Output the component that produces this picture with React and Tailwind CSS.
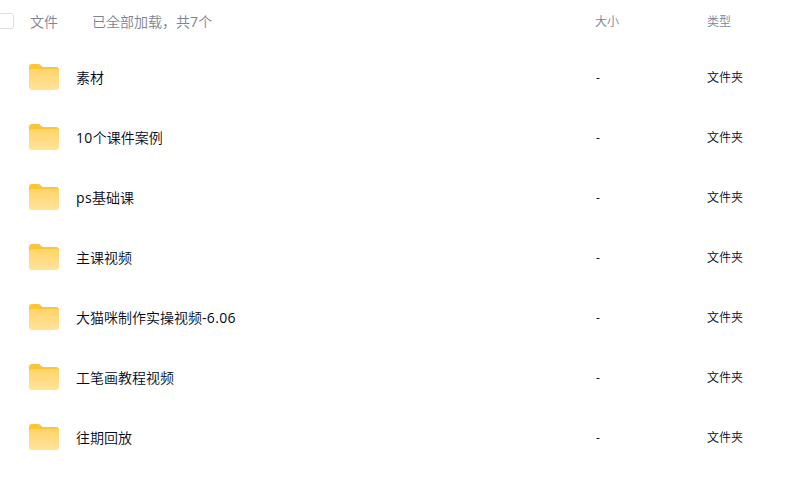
import React from "react";

const files = [
  { name: "素材", size: "-", type: "文件夹" },
  { name: "10个课件案例", size: "-", type: "文件夹" },
  { name: "ps基础课", size: "-", type: "文件夹" },
  { name: "主课视频", size: "-", type: "文件夹" },
  { name: "大猫咪制作实操视频-6.06", size: "-", type: "文件夹" },
  { name: "工笔画教程视频", size: "-", type: "文件夹" },
  { name: "往期回放", size: "-", type: "文件夹" },
];

// latin letters and digits are set a little heavier and wider than the chinese text
function MixedText({ children }) {
  return children.split(/([\x21-\x7e]+)/).map((part, i) =>
    i % 2 ? <span key={i} className="font-normal tracking-[0.35px]">{part}</span> : part
  );
}

function FolderIcon() {
  return (
    <svg width="30" height="26" viewBox="0 0 30 26" className="shrink-0">
      <defs>
        <linearGradient id="folder" x1="0" y1="0" x2="0" y2="1">
          <stop offset="0" stopColor="#ffd567" />
          <stop offset="1" stopColor="#ffe29f" />
        </linearGradient>
      </defs>
      <path d="M0 3a3 3 0 0 1 3-3h6c1.2 0 1.9.3 2.7 1.2l.7.8c.7.8 1.4 1 2.6 1H27a3 3 0 0 1 3 3V14H0z" fill="#fdc536" />
      <path d="M0 8a3 3 0 0 1 3-3h24a3 3 0 0 1 3 3v15a3 3 0 0 1-3 3H3a3 3 0 0 1-3-3z" fill="url(#folder)" />
    </svg>
  );
}

export default function App() {
  return (
    <div className="h-[478px] w-[792px] overflow-hidden bg-white font-['Open_Sans','Noto_Sans_CJK_SC',sans-serif] text-[14px] font-[350] text-[#03081a]">
      <header className="flex h-[47px] items-center pb-[5px] text-[#7c8495]">
        <div className="-ml-[2px] h-4 w-4 rounded-[3px] border border-[#dcdee4]" />
        <div className="ml-4 w-[62px]">文件</div>
        <div className="flex-1"><MixedText>已全部加载，共7个</MixedText></div>
        <div className="w-28 pt-0.5 text-[12px]">大小</div>
        <div className="w-[85px] pt-0.5 text-[12px]">类型</div>
      </header>
      <ul>
        {files.map((file) => (
          <li key={file.name} className="flex h-[60px] items-center pl-[29px]">
            <FolderIcon />
            <div className="ml-[17px] flex-1"><MixedText>{file.name}</MixedText></div>
            <div className="w-28 pt-0.5 pl-px text-[12px] font-normal">{file.size}</div>
            <div className="w-[85px] pt-0.5 text-[12px]">{file.type}</div>
          </li>
        ))}
      </ul>
    </div>
  );
}
